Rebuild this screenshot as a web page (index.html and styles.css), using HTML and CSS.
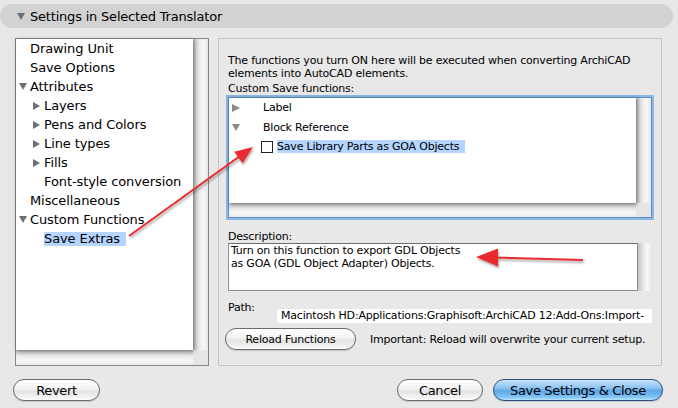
FILE: index.html
```html
<!DOCTYPE html>
<html>
<head>
<meta charset="utf-8">
<link rel="stylesheet" href="styles.css">
</head>
<body>
<div class="header"><span class="tri-down hdr-tri"></span><span class="hdr-title">Settings in Selected Translator</span></div>
<div class="main">
  <div class="tree-panel">
    <div class="tree-content">
      <div class="row l0"><span class="twisty"></span><span>Drawing Unit</span></div>
      <div class="row l0"><span class="twisty"></span><span>Save Options</span></div>
      <div class="row l0"><span class="twisty"><span class="tri-down"></span></span><span>Attributes</span></div>
      <div class="row l1"><span class="twisty"><span class="tri-right"></span></span><span>Layers</span></div>
      <div class="row l1"><span class="twisty"><span class="tri-right"></span></span><span>Pens and Colors</span></div>
      <div class="row l1"><span class="twisty"><span class="tri-right"></span></span><span>Line types</span></div>
      <div class="row l1"><span class="twisty"><span class="tri-right"></span></span><span>Fills</span></div>
      <div class="row l1"><span class="twisty"></span><span>Font-style conversion</span></div>
      <div class="row l0"><span class="twisty"></span><span>Miscellaneous</span></div>
      <div class="row l0"><span class="twisty"><span class="tri-down"></span></span><span>Custom Functions</span></div>
      <div class="row l1"><span class="twisty"></span><span class="sel">Save Extras</span></div>
    </div>
    <div class="vstrip"></div>
    <div class="hstrip"></div>
    <div class="corner"></div>
  </div>
  <div class="right-panel">
    <p class="intro">The functions you turn ON here will be executed when converting ArchiCAD<br>elements into AutoCAD elements.</p>
    <div class="label">Custom Save functions:</div>
    <div class="listbox">
      <div class="list-content">
        <div class="lrow"><span class="ltwisty"><span class="ltri-right"></span></span><span>Label</span></div>
        <div class="lrow"><span class="ltwisty"><span class="ltri-down"></span></span><span>Block Reference</span></div>
        <div class="lrow check-row"><span class="checkbox"></span><span class="lsel">Save Library Parts as GOA Objects</span></div>
      </div>
      <div class="vstrip"></div>
      <div class="hstrip"></div>
      <div class="corner"></div>
    </div>
    <div class="label desc-label">Description:</div>
    <div class="desc">
      <div class="desc-box">Turn on this function to export GDL Objects<br>as GOA (GDL Object Adapter) Objects.</div>
      <div class="desc-strip"></div>
    </div>
    <div class="path-row">
      <span class="path-label">Path:</span>
      <span class="path-value">Macintosh HD:Applications:Graphisoft:ArchiCAD 12:Add-Ons:Import-</span>
    </div>
    <div class="reload-row">
      <span class="btn reload">Reload Functions</span>
      <span class="note">Important: Reload will overwrite your current setup.</span>
    </div>
  </div>
</div>
<div class="footer">
  <span class="btn revert">Revert</span>
  <span class="spacer"></span>
  <span class="btn cancel">Cancel</span>
  <span class="btn primary">Save Settings &amp; Close</span>
</div>
<svg class="arrows" width="678" height="408" viewBox="0 0 678 408">
  <defs>
    <filter id="sh" x="-20%" y="-20%" width="140%" height="140%">
      <feDropShadow dx="1" dy="2" stdDeviation="1.2" flood-color="#000" flood-opacity="0.35"/>
    </filter>
  </defs>
  <g filter="url(#sh)" fill="#ea2b2e" stroke="#ea2b2e">
    <line x1="129" y1="236" x2="240" y2="156" stroke-width="2"/>
    <polygon points="253,147 242.5,163.2 234.3,151.8" stroke="none"/>
    <line x1="583" y1="260" x2="494" y2="257.5" stroke-width="2"/>
    <polygon points="476,257 498,248.6 498,266.6" stroke="none"/>
  </g>
</svg>
</body>
</html>
```
FILE: styles.css
```css
html, body {
  margin: 0;
  padding: 0;
}
body {
  width: 678px;
  height: 408px;
  background: #e8e8e8;
  font-family: "DejaVu Sans", "Liberation Sans", sans-serif;
  color: #000;
  position: relative;
  overflow: hidden;
}
.header {
  margin: 4px 5px 0 0;
  height: 24px;
  background: #d2d2d2;
  border-radius: 12px;
  display: flex;
  align-items: center;
  padding-left: 17px;
  font-size: 13px;
  letter-spacing: -0.2px;
}
.hdr-tri {
  margin-right: 5px;
  margin-top: 1px;
}
.tri-down {
  display: inline-block;
  width: 0;
  height: 0;
  border-left: 4.5px solid transparent;
  border-right: 4.5px solid transparent;
  border-top: 7px solid #6f6f6f;
}
.tri-right {
  display: inline-block;
  width: 0;
  height: 0;
  border-top: 4px solid transparent;
  border-bottom: 4px solid transparent;
  border-left: 7px solid #6f6f6f;
}
.main {
  display: flex;
  padding: 10px 0 0 15px;
}
.tree-panel {
  width: 192px;
  height: 326px;
  border: 1px solid #878787;
  background: #fff;
  display: grid;
  grid-template-columns: 1fr 15px;
  grid-template-rows: 1fr 15px;
}
.tree-content, .list-content {
  background: #fff;
  box-shadow: 1px 1px 4px rgba(0,0,0,0.45);
  position: relative;
  z-index: 1;
}
.vstrip {
  background: linear-gradient(to right, #c2c2c2, #ececec 45%, #f7f7f7 70%, #e6e6e6);
}
.hstrip {
  background: linear-gradient(to bottom, #c2c2c2, #ececec 45%, #f7f7f7 70%, #eaeaea);
}
.corner {
  background: #e6e6e6;
}
.tree-content {
  font-size: 13px;
  letter-spacing: -0.1px;
}
.row {
  height: 19px;
  display: flex;
  align-items: center;
  white-space: nowrap;
}
.row.l1 {
  padding-left: 14px;
}
.twisty {
  width: 14px;
  display: flex;
  align-items: center;
  padding-left: 3px;
  box-sizing: border-box;
}
.sel {
  background: #b5d5ff;
  line-height: 14px;
  padding-right: 6px;
}
.right-panel {
  margin-left: 9px;
  width: 424px;
  height: 311px;
  border: 1px solid #c6c6c6;
  padding: 15px 9px 0 9px;
  box-sizing: content-box;
  font-size: 11px;
  letter-spacing: -0.2px;
}
.intro {
  margin: 0;
  line-height: 13px;
}
.label {
  line-height: 13px;
  margin-top: 2px;
}
.listbox {
  margin-top: 2px;
  height: 119px;
  border: 1px solid #5b8ec8;
  box-shadow: 0 0 0 2px #8cb8e6;
  display: grid;
  grid-template-columns: 1fr 15px;
  grid-template-rows: 1fr 14px;
  background: #fff;
}
.lrow {
  height: 19.5px;
  display: flex;
  align-items: center;
  white-space: nowrap;
}
.ltwisty {
  width: 34px;
  padding-left: 3px;
  box-sizing: border-box;
  display: flex;
  align-items: center;
}
.ltri-right {
  display: inline-block;
  width: 0;
  height: 0;
  border-top: 4.5px solid transparent;
  border-bottom: 4.5px solid transparent;
  border-left: 8px solid #8a8a8a;
}
.ltri-down {
  display: inline-block;
  width: 0;
  height: 0;
  border-left: 4.5px solid transparent;
  border-right: 4.5px solid transparent;
  border-top: 7px solid #8a8a8a;
}
.check-row {
  padding-left: 32px;
}
.checkbox {
  width: 10px;
  height: 10px;
  border: 1px solid #222;
  background: #fff;
  margin-right: 4px;
}
.lsel {
  background: #b5d5ff;
  line-height: 13px;
  padding-right: 6px;
}
.desc-label {
  margin-top: 12px;
}
.desc {
  display: flex;
  height: 48px;
}
.desc-box {
  width: 404px;
  border: 1px solid #8e8e8e;
  border-top-color: #6e6e6e;
  background: #fff;
  padding: 0 2px 0 2px;
  line-height: 13px;
}
.desc-strip {
  width: 14px;
  background: linear-gradient(to right, #c2c2c2, #ececec 45%, #f7f7f7 70%, #e6e6e6);
}
.path-row {
  display: flex;
  align-items: flex-start;
  margin-top: 10px;
}
.path-label {
  width: 49px;
  line-height: 13px;
}
.path-value {
  margin-top: 8px;
  flex: 1;
  background: #fff;
  height: 14px;
  line-height: 14px;
  padding-left: 4px;
  white-space: nowrap;
  overflow: hidden;
}
.reload-row {
  display: flex;
  align-items: center;
  margin-top: 5px;
  margin-left: -3px;
}
.btn {
  display: inline-flex;
  align-items: center;
  justify-content: center;
  height: 20px;
  border: 1px solid #6b6b6b;
  border-radius: 11px;
  background: linear-gradient(to bottom, #ffffff, #f3f3f3 45%, #e2e2e2 55%, #f4f4f4 90%, #fff);
  box-shadow: 0 1px 1px rgba(0,0,0,0.15);
  white-space: nowrap;
}
.reload {
  width: 129px;
  font-size: 11px;
}
.note {
  margin-left: 14px;
  white-space: nowrap;
}
.footer {
  display: flex;
  align-items: center;
  padding: 13px 15px 0 13px;
  font-size: 13px;
  letter-spacing: -0.35px;
}
.spacer {
  flex: 1;
}
.revert {
  width: 85px;
}
.cancel {
  width: 84px;
  margin-right: 10px;
}
.primary {
  width: 168px;
  border-color: #2d4f7f;
  background: linear-gradient(to bottom, #c9e4fb, #8cc2f0 40%, #5ea6e6 55%, #7fc4f7 85%, #b8e3ff);
}
.arrows {
  position: absolute;
  left: 0;
  top: 0;
  z-index: 10;
  pointer-events: none;
}
```
